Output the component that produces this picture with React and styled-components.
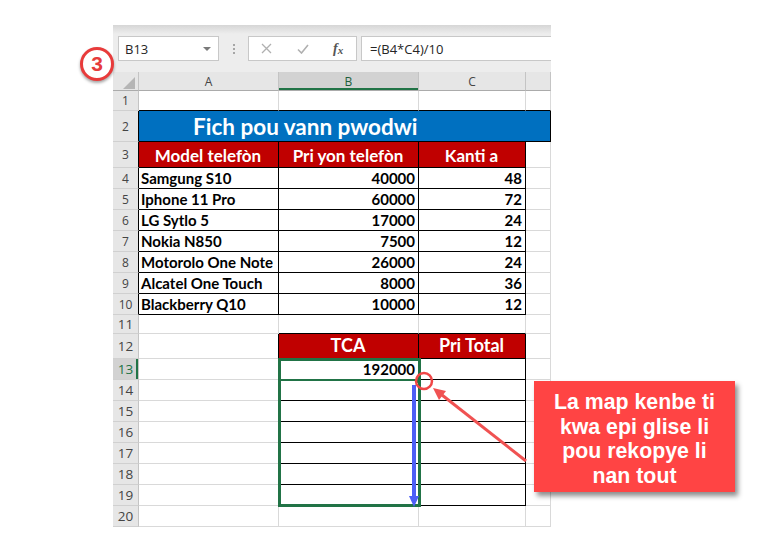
import React from 'react';
import styled, { createGlobalStyle } from 'styled-components';

const GlobalStyle = createGlobalStyle`
  html, body { margin: 0; padding: 0; background: #fff; }
`;

const GREEN = '#217346';
const GRID = '#d9d9d9';
const BLACK = '#000';

const Page = styled.div`
  position: relative;
  width: 771px;
  height: 551px;
  overflow: hidden;
  box-sizing: border-box;
  padding: 25px 0 0 113px;
  background: #fff;
`;

const Window = styled.div`
  width: 438px;
`;

const FormulaBar = styled.div`
  display: flex;
  align-items: center;
  height: 47px;
  padding-left: 5px;
  box-sizing: border-box;
  background: linear-gradient(#d6d6d6, #ededed 9px, #ededed);
  font-family: "Open Sans", "Noto Sans", sans-serif;
  font-size: 13px;
  color: #262626;
`;

const NameBox = styled.div`
  display: flex;
  align-items: center;
  justify-content: space-between;
  width: 101px;
  height: 25px;
  box-sizing: border-box;
  padding: 0 7px 0 6px;
  background: #fff;
  border: 1px solid #c8c8c8;
`;

const Caret = styled.span`
  width: 0;
  height: 0;
  border-left: 4px solid transparent;
  border-right: 4px solid transparent;
  border-top: 4px solid #7a7a7a;
`;

const Grip = styled.div`
  display: flex;
  flex-direction: column;
  gap: 2px;
  margin: 0 13px 0 14px;

  span {
    width: 2px;
    height: 2px;
    background: #a6a6a6;
  }
`;

const ButtonBox = styled.div`
  display: flex;
  width: 109px;
  height: 25px;
  box-sizing: border-box;
  background: #fff;
  border: 1px solid #c8c8c8;
`;

const BarButton = styled.div`
  flex: 1;
  display: flex;
  align-items: center;
  justify-content: center;
`;

const Fx = styled.span`
  font-family: "Liberation Serif", serif;
  font-style: italic;
  font-weight: 700;
  font-size: 14px;
  color: #555;

  sub {
    font-size: 11px;
    vertical-align: -1px;
  }
`;

const FormulaInput = styled.div`
  flex: 1;
  display: flex;
  align-items: center;
  height: 25px;
  box-sizing: border-box;
  margin-left: 4px;
  padding-left: 8px;
  background: #fff;
  border: 1px solid #c8c8c8;
  border-right: none;
`;

const Sheet = styled.div`
  position: relative;
  display: grid;
  grid-template-columns: 26px 140px 140px 107px 25px;
  grid-template-rows: ${p => p.$rows};
`;

const ColHead = styled.div`
  display: flex;
  align-items: center;
  justify-content: center;
  box-sizing: border-box;
  background: ${p => (p.$active ? '#d2d2d2' : '#e6e6e6')};
  border-right: 1px solid #c4c4c4;
  border-bottom: 1px solid #ababab;
  box-shadow: ${p => (p.$active ? `inset 0 -2px 0 ${GREEN}` : 'none')};
  font-family: "Open Sans", "Noto Sans", sans-serif;
  font-size: 12px;
  color: ${p => (p.$active ? '#1d5e3a' : '#444')};
`;

const Corner = styled(ColHead)`
  align-items: flex-end;
  justify-content: flex-end;
  padding: 0 3px 1px 0;
`;

const RowHead = styled.div`
  display: flex;
  align-items: center;
  justify-content: center;
  box-sizing: border-box;
  background: ${p => (p.$active ? '#d2d2d2' : '#e6e6e6')};
  border-right: 1px solid ${p => p.$r};
  border-bottom: 1px solid #d0d0d0;
  box-shadow: ${p => (p.$active ? `inset -2px 0 0 ${GREEN}` : 'none')};
  font-family: "Open Sans", "Noto Sans", sans-serif;
  font-size: ${p => (p.$big ? 13.5 : 12)}px;
  color: ${p => (p.$active ? GREEN : '#444')};
`;

const Cell = styled.div`
  display: flex;
  align-items: flex-end;
  justify-content: ${p => p.$align || 'flex-start'};
  box-sizing: border-box;
  padding: 0 3px 1px 2px;
  overflow: hidden;
  white-space: nowrap;
  grid-column: span ${p => p.$span || 1};
  background: ${p => p.$bg || '#fff'};
  border-right: 1px solid ${p => p.$r};
  border-bottom: 1px solid ${p => p.$b};
  font-family: Lato, "Noto Sans", sans-serif;
  font-weight: 700;
  font-size: ${p => p.$size || 15}px;
  line-height: 1.2;
  color: ${p => p.$color || '#000'};
`;

const Title = styled(Cell)`
  align-items: center;
  padding: 0 0 0 54px;
  font-size: 22.5px;
`;

const Selection = styled.div`
  position: absolute;
  left: 165px;
  top: 286px;
  width: 143px;
  height: 149px;
  box-sizing: border-box;
  border: 3px solid ${GREEN};
`;

const ActiveCell = styled.div`
  height: 18px;
  border-bottom: 2px solid ${GREEN};
`;

const Annotations = styled.svg`
  position: absolute;
  left: 0;
  top: 0;
  pointer-events: none;
`;

const StepBadge = styled.div`
  position: absolute;
  left: 80px;
  top: 47px;
  width: 34px;
  height: 34px;
  box-sizing: border-box;
  border: 3px solid #e83b3b;
  border-radius: 50%;
  background: #fff;
  box-shadow: 0 2px 3px rgba(0, 0, 0, 0.35);
  display: flex;
  align-items: center;
  justify-content: center;
  font-family: "Liberation Sans", Arial, sans-serif;
  font-weight: 700;
  font-size: 21px;
  color: #e63b3b;
`;

const Callout = styled.div`
  position: absolute;
  left: 534px;
  top: 381px;
  width: 201px;
  height: 111px;
  box-sizing: border-box;
  padding-top: 5px;
  display: flex;
  align-items: center;
  justify-content: center;
  background: #ff4444;
  box-shadow: 3px 4px 5px rgba(0, 0, 0, 0.45);
  text-align: center;
  font-family: "Liberation Sans", Arial, sans-serif;
  font-weight: 700;
  font-size: 21.3px;
  line-height: 24.5px;
  color: #fff;
`;

const ROW_HEIGHTS = [19, 20, 31, 26, 21, 21, 21, 21, 21, 21, 21, 19, 25, 21, 21, 21, 21, 21, 21, 21, 21];

const products = [
  ['Samgung S10', '40000', '48'],
  ['Iphone 11 Pro', '60000', '72'],
  ['LG Sytlo 5', '17000', '24'],
  ['Nokia N850', '7500', '12'],
  ['Motorolo One Note', '26000', '24'],
  ['Alcatel One Touch', '8000', '36'],
  ['Blackberry Q10', '10000', '12'],
];

const RED = '#c00000';

function bordered(r, c) {
  if (r === 2) return c >= 1 && c <= 4;
  if (r >= 3 && r <= 10) return c >= 1 && c <= 3;
  if (r >= 12 && r <= 19) return c >= 2 && c <= 3;
  return false;
}

function content(r, c) {
  if (r === 3) {
    const t = ['Model telefòn', 'Pri yon telefòn', 'Kanti a'][c - 1];
    if (t) return { text: t, bg: RED, color: '#fff', align: 'center', size: 17 };
  }
  if (r >= 4 && r <= 10 && c <= 3) {
    const t = products[r - 4][c - 1];
    return { text: t, align: c === 1 ? 'flex-start' : 'flex-end' };
  }
  if (r === 12) {
    const t = ['TCA', 'Pri Total'][c - 2];
    if (t) return { text: t, bg: RED, color: '#fff', align: 'center', size: 18 };
  }
  if (r === 13 && c === 2) return { text: '192000', align: 'flex-end' };
  return {};
}

function SheetCells() {
  const out = [];
  for (let r = 1; r <= 20; r++) {
    out.push(
      <RowHead
        key={`h${r}`}
        $r={bordered(r, 1) ? BLACK : '#c4c4c4'}
        $active={r === 13}
        $big={r > 10}
      >
        {r}
      </RowHead>
    );
    if (r === 2) {
      out.push(
        <Title key="title" $span={4} $bg="#0070c0" $color="#fff" $r={BLACK} $b={BLACK}>
          Fich pou vann pwodwi
        </Title>
      );
      continue;
    }
    for (let c = 1; c <= 4; c++) {
      const k = content(r, c);
      const right = bordered(r, c) || bordered(r, c + 1) ? BLACK : GRID;
      const bottom = bordered(r, c) || bordered(r + 1, c) ? BLACK : GRID;
      out.push(
        <Cell
          key={`${r}-${c}`}
          $r={right}
          $b={bottom}
          $bg={k.bg}
          $color={k.color}
          $align={k.align}
          $size={k.size}
        >
          {k.text}
        </Cell>
      );
    }
  }
  return out;
}

export default function App() {
  return (
    <>
      <GlobalStyle />
      <Page>
        <Window>
          <FormulaBar>
            <NameBox>
              B13
              <Caret />
            </NameBox>
            <Grip>
              <span />
              <span />
              <span />
            </Grip>
            <ButtonBox>
              <BarButton>
                <svg width="11" height="11" viewBox="0 0 11 11">
                  <path d="M1 1 L10 10 M10 1 L1 10" stroke="#b0b0b0" strokeWidth="1.3" />
                </svg>
              </BarButton>
              <BarButton>
                <svg width="12" height="10" viewBox="0 0 12 10">
                  <path d="M1 5.5 L4.5 9 L11 1" stroke="#b0b0b0" strokeWidth="1.6" fill="none" />
                </svg>
              </BarButton>
              <BarButton>
                <Fx>
                  f<sub>x</sub>
                </Fx>
              </BarButton>
            </ButtonBox>
            <FormulaInput>=(B4*C4)/10</FormulaInput>
          </FormulaBar>

          <Sheet $rows={ROW_HEIGHTS.map(h => `${h}px`).join(' ')}>
            <Corner>
              <svg width="12" height="12" viewBox="0 0 12 12">
                <polygon points="12,0 12,12 0,12" fill="#b5b5b5" />
              </svg>
            </Corner>
            <ColHead>A</ColHead>
            <ColHead $active>B</ColHead>
            <ColHead>C</ColHead>
            <ColHead />
            <SheetCells />
            <Selection>
              <ActiveCell />
            </Selection>
          </Sheet>
        </Window>

        <Annotations width="771" height="551" viewBox="0 0 771 551">
          <rect x="416" y="378" width="5" height="5" fill={GREEN} />
          <line x1="414" y1="385" x2="414" y2="497" stroke="#4d5ef6" strokeWidth="4" />
          <polygon points="409,496 419,496 414,507" fill="#4d5ef6" />
          <circle cx="424" cy="381" r="8" fill="none" stroke="#f04646" strokeWidth="2.5" />
          <line x1="526" y1="461" x2="442" y2="395" stroke="#f05252" strokeWidth="3" />
          <polygon points="433,388 446,391 439,400" fill="#f05252" />
        </Annotations>

        <StepBadge>3</StepBadge>

        <Callout>
          La map kenbe ti
          <br />
          kwa epi glise li
          <br />
          pou rekopye li
          <br />
          nan tout
        </Callout>
      </Page>
    </>
  );
}
